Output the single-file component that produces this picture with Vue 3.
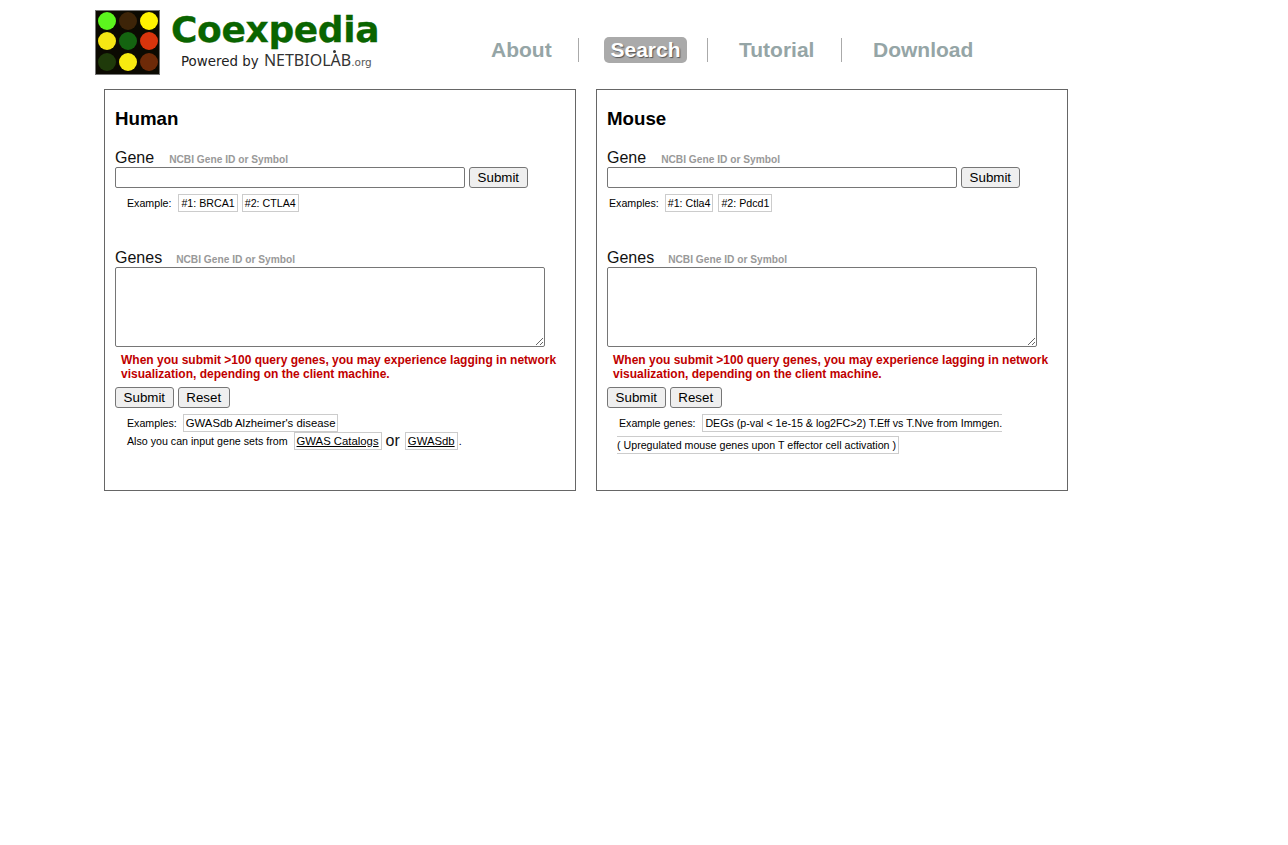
<script setup>
const dots = ['#5cf51e','#3d2408','#fff200','#f5e614','#146410','#d8340c','#1f3a0a','#f7ea10','#6e2a08']
const nav = [
  { label: 'About', cls: 'about' },
  { label: 'Search', cls: 'search' },
  { label: 'Tutorial', cls: 'tutorial' },
  { label: 'Download', cls: 'download' },
]
</script>

<template>
  <div class="page">
    <header class="header">
      <div class="logo">
        <div class="matrix">
          <span v-for="(c, i) in dots" :key="i" class="dot" :style="{ background: c }"></span>
        </div>
        <div class="brand">
          <div class="brand-name">Coexpedia</div>
          <div class="brand-sub">Powered by <span class="netbio">NETBIOLAB<i class="a-dot"></i></span><span class="org">.org</span></div>
        </div>
      </div>
      <nav class="nav">
        <a v-for="n in nav" :key="n.label" class="nav-item" :class="n.cls">{{ n.label }}</a>
      </nav>
    </header>

    <main class="panels">
      <section class="panel">
        <h2 class="title">Human</h2>
        <div class="label-row"><span class="label">Gene</span><span class="hint">NCBI Gene ID or Symbol</span></div>
        <div class="input-row"><input class="text" type="text" /><button class="btn">Submit</button></div>
        <div class="ex ex-gene indent">
          <span class="ex-label">Example:</span><span class="chip">#1: BRCA1</span><span class="chip">#2: CTLA4</span>
        </div>
        <div class="label-row second"><span class="label">Genes</span><span class="hint hint2">NCBI Gene ID or Symbol</span></div>
        <textarea class="area"></textarea>
        <p class="warn">When you submit &gt;100 query genes, you may experience lagging in network visualization, depending on the client machine.</p>
        <div class="btns"><button class="btn">Submit</button><button class="btn">Reset</button></div>
        <div class="ex ex-set indent">
          <span class="ex-label wide">Examples:</span><span class="chip big">GWASdb Alzheimer's disease</span>
        </div>
        <div class="ex ex-also indent">
          <span class="ex-label also">Also you can input gene sets from</span><span class="chip big link">GWAS Catalogs</span><span class="or">or</span><span class="chip big link">GWASdb</span><span class="dotend">.</span>
        </div>
      </section>

      <section class="panel">
        <h2 class="title">Mouse</h2>
        <div class="label-row"><span class="label">Gene</span><span class="hint">NCBI Gene ID or Symbol</span></div>
        <div class="input-row"><input class="text" type="text" /><button class="btn">Submit</button></div>
        <div class="ex ex-gene indent-small">
          <span class="ex-label tight">Examples:</span><span class="chip gap5">#1: Ctla4</span><span class="chip">#2: Pdcd1</span>
        </div>
        <div class="label-row second"><span class="label">Genes</span><span class="hint hint2">NCBI Gene ID or Symbol</span></div>
        <textarea class="area"></textarea>
        <p class="warn">When you submit &gt;100 query genes, you may experience lagging in network visualization, depending on the client machine.</p>
        <div class="btns"><button class="btn">Submit</button><button class="btn">Reset</button></div>
        <div class="ex ex-set indent">
          <span class="ex-label">Example genes:</span><span class="chip open-right">DEGs (p-val &lt; 1e-15 &amp; log2FC&gt;2) T.Eff vs T.Nve from Immgen.</span>
        </div>
        <div class="ex ex-up">
          <span class="chip open-left">( Upregulated mouse genes upon T effector cell activation )</span>
        </div>
      </section>
    </main>
  </div>
</template>

<style>
html, body { margin: 0; background: #fff; }
</style>

<style scoped>
.page { width: 1288px; height: 845px; font-family: "Liberation Sans", Arial, sans-serif; color: #000; overflow: hidden; }
.header { display: flex; height: 89px; padding-left: 95px; box-sizing: border-box; }
.logo { display: flex; width: 290px; padding-top: 10px; box-sizing: border-box; }
.matrix { width: 65px; height: 65px; box-sizing: border-box; background: #0c0a02; border: 1px solid #777; display: grid; grid-template-columns: repeat(3, 1fr); grid-template-rows: repeat(3, 1fr); place-items: center; padding: 0 0 2px 1px; }
.dot { width: 18px; height: 18px; border-radius: 50%; filter: blur(.6px); }
.brand { margin-left: 11px; }
.brand-name { font-family: "DejaVu Sans", Verdana, sans-serif; font-weight: 700; font-size: 36px; line-height: 40px; color: #0a6400; letter-spacing: -.35px; -webkit-text-stroke: .3px #0a6400; }
.brand-sub { margin: 0 0 0 10px; font-family: "DejaVu Sans", sans-serif; font-size: 13.4px; line-height: 20px; color: #222; white-space: nowrap; }
.netbio { position: relative; font-family: "Noto Sans", sans-serif; font-size: 16px; margin-left: 1px; color: #333; }
.a-dot { position: absolute; left: 69px; top: 1px; width: 3px; height: 3px; border-radius: 50%; background: #333; }
.org { font-size: 10.5px; color: #555; }
.nav { display: flex; align-items: center; height: 26px; margin-top: 37px; margin-left: 105px; }
.nav-item { font-size: 21px; line-height: 26px; font-weight: 700; color: #95a5a6; box-sizing: border-box; white-space: nowrap; }
.about { width: 89px; padding-left: 1px; border-right: 1px solid #aaa; height: 24px; line-height: 24px; }
.search { margin-left: 25px; width: 83px; height: 26px; text-align: center; background: #aaa; color: #fff; border-radius: 5px; text-shadow: 1px 1px 1px #555; }
.tutorial { margin-left: 20px; width: 135px; padding-left: 31px; height: 24px; line-height: 24px; border-left: 1px solid #aaa; border-right: 1px solid #aaa; }
.download { margin-left: 0; padding-left: 31px; height: 24px; line-height: 24px; }
.panels { display: flex; gap: 20px; padding-left: 104px; }
.panel { width: 472px; height: 402px; box-sizing: border-box; border: 1px solid #666; padding-left: 10px; }
.title { margin: 17px 0 0; font-size: 18.72px; line-height: 23px; font-weight: 700; }
.label-row { display: flex; align-items: baseline; margin-top: 18px; height: 20px; }
.label-row.second { margin-top: 36px; }
.label { font-size: 16px; line-height: 20px; color: #111; }
.hint { margin-left: 15px; font-size: 10.2px; font-weight: 700; color: #999; }
.hint2 { margin-left: 14px; }
.input-row { display: flex; align-items: center; height: 21px; margin-top: -1px; gap: 4px; }
.text { width: 350px; height: 21px; box-sizing: border-box; border: 1px solid #767676; border-radius: 2px; padding: 1px 2px; margin: 0; background: #fff; }
.btn { height: 21px; box-sizing: border-box; padding: 0 7.6px; margin: 0; font: 13.33px/17px "Liberation Sans", Arial, sans-serif; color: #000; background: #efefef; border: 1px solid #767676; border-radius: 3px; }
.ex { display: flex; align-items: center; font-size: 10.67px; color: #000; }
.ex-gene { margin-top: 5px; height: 19px; }
.indent { padding-left: 12px; }
.indent-small { padding-left: 2px; }
.ex-label { margin-right: 7px; }
.ex-label.tight { margin-right: 6px; }
.chip { box-sizing: border-box; display: inline-flex; align-items: center; height: 18px; padding: 0 2px; border: 1px solid #ccc; margin-right: 4px; white-space: nowrap; }
.gap5 { margin-right: 5px; }
.big { font-size: 11.33px; }
.area { display: block; width: 430px; height: 80px; box-sizing: border-box; margin: -1px 0 0; border: 1px solid #767676; border-radius: 2px; padding: 2px; background: #fff; }
.warn { margin: 6px 0 0 6px; width: 445px; font-size: 12px; line-height: 14px; font-weight: 700; color: #bf0000; }
.btns { display: flex; gap: 4px; margin-top: 6px; }
.ex-set { margin-top: 6px; height: 18px; }
.ex-label.wide { margin-right: 6px; }
.ex-also { margin-top: 0; height: 18px; }
.ex-label.also { margin-right: 6px; }
.link { text-decoration: underline; }
.or { font-size: 16px; margin: -1px 5px 0 0; color: #111; }
.dotend { margin-left: -3px; }
.open-right { border-right: 0; padding-right: 0; }
.ex-up { margin-top: 4px; padding-left: 10px; height: 18px; }
.open-left { border-left: 0; padding-left: 0; }
</style>
